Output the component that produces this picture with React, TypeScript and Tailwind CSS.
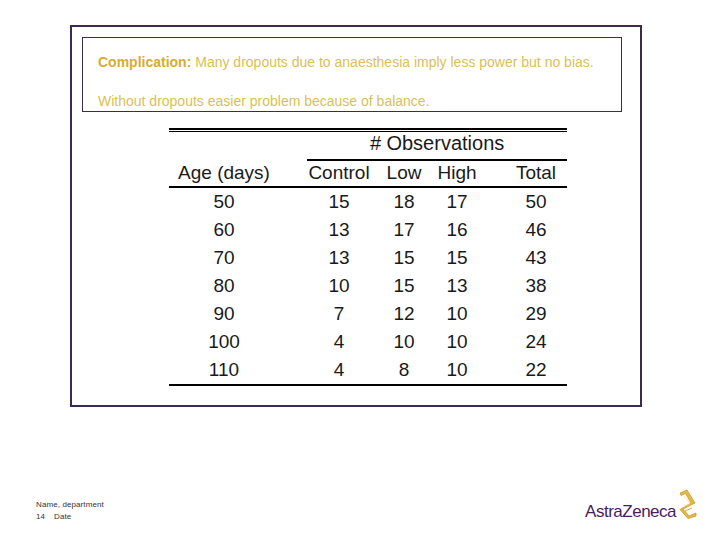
import React from 'react';

const rows = [
  ['50', '15', '18', '17', '50'],
  ['60', '13', '17', '16', '46'],
  ['70', '13', '15', '15', '43'],
  ['80', '10', '15', '13', '38'],
  ['90', '7', '12', '10', '29'],
  ['100', '4', '10', '10', '24'],
  ['110', '4', '8', '10', '22'],
];

const Row = ({ cells, className = '' }: { cells: string[]; className?: string }) => (
  <div className={`flex ${className}`}>
    <div className="w-[110px] text-center">{cells[0]}</div>
    <div className="ml-[28px] w-[64px] text-center">{cells[1]}</div>
    <div className="w-[66px] text-center">{cells[2]}</div>
    <div className="w-[40px] text-center">{cells[3]}</div>
    <div className="ml-[28px] w-[62px] text-center">{cells[4]}</div>
  </div>
);

// gold ribbon mark next to the wordmark
const AzMark = () => (
  <svg width="24" height="30" viewBox="0 0 24 30" fill="none">
    <path
      d="M6 4 L13 1 L21 14 L9 20 L15 27 L22 24 L22 27 L14 29.5 L6 20.5 L17 14 L11.5 4.5 L7 6.5 Z"
      fill="#e2b84a"
      stroke="#c99a2a"
      strokeWidth="0.8"
      strokeLinejoin="round"
    />
    <path d="M10 7 L16 14.5 L10 17.5" stroke="#f3dc9a" strokeWidth="0.9" strokeLinejoin="round" />
    <path d="M11 22 L18 19" stroke="#c99a2a" strokeWidth="0.8" />
  </svg>
);

export default function App() {
  return (
    <div className="w-[720px] h-[540px] bg-white overflow-hidden pt-[25px] font-['Liberation_Sans',Arial,sans-serif]">
      <div className="ml-[70px] w-[572px] h-[382px] border-2 border-[#3d2b4f]">
        <div className="ml-[10px] mt-[10px] w-[540px] h-[75px] border border-[#3d2b4f] pl-[15px] pt-[16px] text-[14px] leading-[16px] text-[#d9bf57]">
          <p>
            <span className="font-bold text-[#d8ab32]">Complication:</span> Many dropouts due to anaesthesia imply less power but no bias.
          </p>
          <p className="mt-[23px]">Without dropouts easier problem because of balance.</p>
        </div>

        <div className="ml-[97px] mt-[16px] w-[398px] text-[19px] text-[#1a1a1a]">
          <div className="h-[2px] bg-black" />
          <div className="h-px mt-px bg-black" />
          <div className="h-[27px] flex">
            <div className="ml-[138px] w-[260px] text-center leading-[22px] text-[20px]">
              <span className="italic">#</span> Observations
            </div>
          </div>
          <div className="ml-[138px] h-[2px] bg-black" />
          <Row className="h-[25px] leading-[24px]" cells={['Age (days)', 'Control', 'Low', 'High', 'Total']} />
          <div className="h-[2px] bg-black" />
          {rows.map((r) => (
            <Row key={r[0]} className="h-[28px] leading-[27px]" cells={r} />
          ))}
          <div className="h-[2px] bg-black" />
        </div>
      </div>

      <div className="mt-[82px] pl-[36px] pr-[22px] flex justify-between items-start">
        <div className="mt-[10px] text-[8px] leading-[12px] text-[#333] tracking-[0.1px]">
          <div>Name, department</div>
          <div className="flex">
            <span className="w-[18px]">14</span>
            <span>Date</span>
          </div>
        </div>
        <div className="flex items-start">
          <span className="mt-[14px] text-[17px] leading-[18px] text-[#4a1d5c] tracking-[-0.5px]">AstraZeneca</span>
          <div className="-ml-[2px]">
            <AzMark />
          </div>
        </div>
      </div>
    </div>
  );
}
